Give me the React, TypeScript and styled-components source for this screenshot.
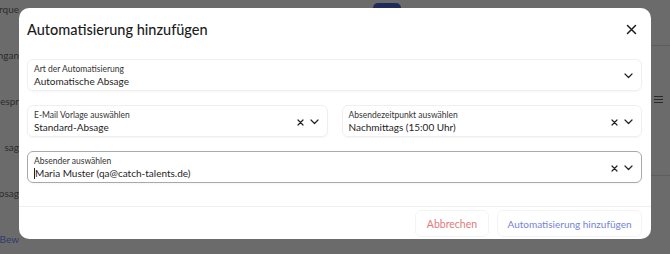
import React from 'react'
import styled, { createGlobalStyle } from 'styled-components'

const GlobalStyle = createGlobalStyle`
  html, body {
    margin: 0;
    padding: 0;
    width: 670px;
    height: 254px;
    overflow: hidden;
    font-family: Lato, "Noto Sans", sans-serif;
  }
`

const Backdrop = styled.div`
  position: relative;
  width: 670px;
  height: 254px;
  background: #6b6b6b;
  overflow: hidden;
`

const BgColumn = styled.div`
  display: flex;
  flex-direction: column;
  width: 19px;
  padding-top: 3px;
  font-size: 10px;
  white-space: nowrap;
  overflow: hidden;
`

const BgRow = styled.div<{ $blue?: boolean }>`
  height: 46px;
  display: flex;
  align-items: flex-start;
  direction: rtl;
  color: ${(p) => (p.$blue ? '#2e3a6e' : '#2c2c2c')};
`

const BgPill = styled.div`
  position: absolute;
  left: 373px;
  top: 3px;
  width: 28px;
  height: 10px;
  border-radius: 5px;
  background: #1e2a5c;
`

const BgMenu = styled.div`
  position: absolute;
  left: 654px;
  top: 96px;
  width: 9px;
  display: flex;
  flex-direction: column;
  gap: 2px;
  span {
    height: 1px;
    background: #2a2a2a;
  }
`

const BgLine = styled.div<{ $top: number }>`
  position: absolute;
  left: 651px;
  right: 0;
  top: ${(p) => p.$top}px;
  height: 1px;
  background: #5e5e5e;
`

const Modal = styled.div`
  position: absolute;
  left: 19px;
  top: 8px;
  width: 632px;
  height: 231px;
  background: #fff;
  border-radius: 10px;
  display: flex;
  flex-direction: column;
  overflow: hidden;
`

const Header = styled.div`
  display: flex;
  align-items: center;
  justify-content: space-between;
  padding: 6px 14px 0 8px;
  height: 30px;
`

const Title = styled.h2`
  margin: 0;
  font-size: 14.5px;
  font-weight: 500;
  color: #1c1c1c;
`

const Close = styled.button`
  border: none;
  background: none;
  padding: 0;
  width: 11px;
  height: 11px;
  display: flex;
  cursor: pointer;
`

const Body = styled.div`
  display: flex;
  flex-direction: column;
  gap: 14px;
  padding: 15px 9px 0 8px;
`

const Row = styled.div`
  display: flex;
  gap: 14px;
`

const Field = styled.div<{ $focused?: boolean }>`
  flex: 1 1 0;
  min-width: 0;
  min-height: 32px;
  max-height: 32px;
  box-sizing: border-box;
  border: 1px solid ${(p) => (p.$focused ? '#a9a9a9' : '#efefef')};
  border-radius: 6px;
  box-shadow: 0 1px 2px rgba(0, 0, 0, 0.04);
  display: flex;
  align-items: center;
  padding: 0 8px 0 6px;
`

const FieldText = styled.div`
  flex: 1;
  display: flex;
  flex-direction: column;
  gap: 1px;
  padding-top: 1px;
`

const Label = styled.span`
  font-size: 8.5px;
  color: #333;
  line-height: 10px;
`

const Value = styled.span`
  font-size: 10px;
  color: #1e1e1e;
  line-height: 12px;
  display: flex;
  align-items: center;
`

const Caret = styled.span`
  display: inline-block;
  width: 1px;
  height: 11px;
  background: #222;
`

const Icons = styled.div`
  display: flex;
  align-items: center;
  gap: 6px;
  padding-top: 2px;
`

const Divider = styled.div`
  height: 1px;
  background: #f0f0f0;
  margin-top: 23px;
`

const Footer = styled.div`
  display: flex;
  justify-content: flex-end;
  gap: 8px;
  padding: 3px 9px 0 0;
`

const Button = styled.button<{ $tone: 'danger' | 'primary'; $w: number }>`
  width: ${(p) => p.$w}px;
  height: 27px;
  background: #fff;
  border: 1px solid #f3f3f3;
  border-radius: 6px;
  font-family: inherit;
  font-size: ${(p) => (p.$tone === 'danger' ? '10.5px' : '10px')};
  color: ${(p) => (p.$tone === 'danger' ? '#e07a7a' : '#7584d6')};
  cursor: pointer;
`

const Chevron = () => (
  <svg width="9" height="6" viewBox="0 0 9 6" fill="none">
    <path d="M1 1l3.5 3.5L8 1" stroke="#222" strokeWidth="1.2" strokeLinecap="round" strokeLinejoin="round" />
  </svg>
)

const Clear = () => (
  <svg width="7" height="7" viewBox="0 0 7 7" fill="none">
    <path d="M1 1l5 5M6 1L1 6" stroke="#222" strokeWidth="1.2" strokeLinecap="round" />
  </svg>
)

type SelectProps = {
  label: string
  value: string
  clearable?: boolean
  focused?: boolean
}

const SelectField = ({ label, value, clearable, focused }: SelectProps) => (
  <Field $focused={focused}>
    <FieldText>
      <Label>{label}</Label>
      <Value>
        {focused && <Caret />}
        {value}
      </Value>
    </FieldText>
    <Icons>
      {clearable && <Clear />}
      <Chevron />
    </Icons>
  </Field>
)

const bgLabels = ['orque', 'ngan', 'espr', 'sag', 'osag']

const App = () => (
  <>
    <GlobalStyle />
    <Backdrop>
      <BgColumn>
        {bgLabels.map((t) => (
          <BgRow key={t}>{t}</BgRow>
        ))}
        <BgRow $blue>Bew</BgRow>
      </BgColumn>
      <BgPill />
      <BgLine $top={45} />
      <BgLine $top={175} />
      <BgMenu>
        <span />
        <span />
        <span />
      </BgMenu>
      <Modal>
        <Header>
          <Title>Automatisierung hinzufügen</Title>
          <Close aria-label="Schließen">
            <svg width="11" height="11" viewBox="0 0 11 11" fill="none">
              <path d="M1.5 1.5l8 8M9.5 1.5l-8 8" stroke="#1c1c1c" strokeWidth="1.5" strokeLinecap="round" />
            </svg>
          </Close>
        </Header>
        <Body>
          <SelectField label="Art der Automatisierung" value="Automatische Absage" />
          <Row>
            <SelectField label="E-Mail Vorlage auswählen" value="Standard-Absage" clearable />
            <SelectField label="Absendezeitpunkt auswählen" value="Nachmittags (15:00 Uhr)" clearable />
          </Row>
          <SelectField label="Absender auswählen" value="Maria Muster (qa@catch-talents.de)" clearable focused />
        </Body>
        <Divider />
        <Footer>
          <Button $tone="danger" $w={74}>Abbrechen</Button>
          <Button $tone="primary" $w={145}>Automatisierung hinzufügen</Button>
        </Footer>
      </Modal>
    </Backdrop>
  </>
)

export default App
